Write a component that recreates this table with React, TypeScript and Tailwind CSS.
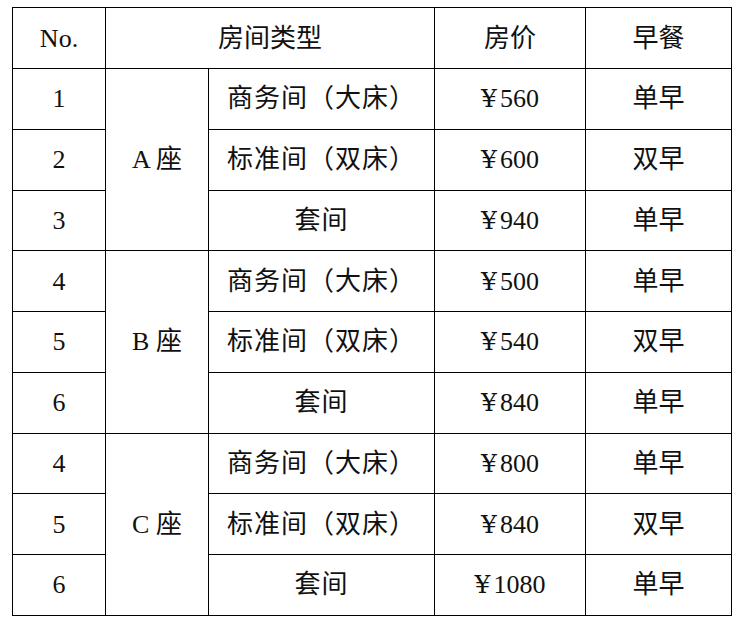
type Row = {
  no: string;
  block?: string;
  type: string;
  price: string;
  meal: string;
};

const rows: Row[] = [
  { no: '1', block: 'A 座', type: '商务间（大床）', price: '560', meal: '单早' },
  { no: '2', type: '标准间（双床）', price: '600', meal: '双早' },
  { no: '3', type: '套间', price: '940', meal: '单早' },
  { no: '4', block: 'B 座', type: '商务间（大床）', price: '500', meal: '单早' },
  { no: '5', type: '标准间（双床）', price: '540', meal: '双早' },
  { no: '6', type: '套间', price: '840', meal: '单早' },
  { no: '4', block: 'C 座', type: '商务间（大床）', price: '800', meal: '单早' },
  { no: '5', type: '标准间（双床）', price: '840', meal: '双早' },
  { no: '6', type: '套间', price: '1080', meal: '单早' },
];

const cell = 'border border-black text-center align-middle p-0';

export default function App() {
  return (
    <div className="w-[740px] h-[621px] bg-white pt-[7px] pl-[12px]">
      <table
        className="table-fixed border-collapse w-[719px] text-[26px] text-[#111]"
        style={{ fontFamily: '"Liberation Serif", "Noto Sans CJK SC", serif' }}
      >
        <colgroup>
          <col className="w-[93px]" />
          <col className="w-[103px]" />
          <col className="w-[226px]" />
          <col className="w-[151px]" />
          <col className="w-[146px]" />
        </colgroup>
        <tbody>
          <tr className="h-[61px]">
            <td className={cell}>No.</td>
            <td className={cell} colSpan={2}>房间类型</td>
            <td className={cell}>房价</td>
            <td className={cell}>早餐</td>
          </tr>
          {rows.map((r, i) => (
            <tr key={i} className="h-[60.75px]">
              <td className={cell}>{r.no}</td>
              {r.block && (
                <td className={cell} rowSpan={3}>{r.block}</td>
              )}
              <td className={cell}>
                <span className="tracking-[1px]">{r.type}</span>
              </td>
              <td className={cell}>
                <span
                  className="inline-block w-[19px] text-left text-[25px]"
                  style={{ fontFamily: '"DejaVu Serif", serif' }}
                >
                  ¥
                </span>
                {r.price}
              </td>
              <td className={cell}>{r.meal}</td>
            </tr>
          ))}
        </tbody>
      </table>
    </div>
  );
}
